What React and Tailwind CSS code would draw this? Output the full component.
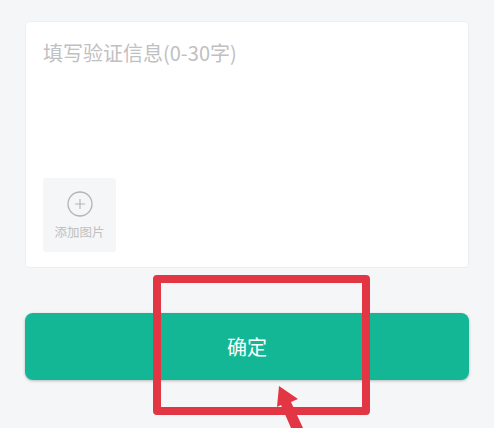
const cjk = { fontFamily: '"Noto Sans CJK SC", "Noto Sans", sans-serif' };

function App() {
  return (
    <div
      className="relative h-[428px] w-[494px] overflow-hidden bg-[#f4f6f8] px-[25px] pt-[21px]"
      style={cjk}
    >
      <div className="flex h-[247px] flex-col justify-between rounded-[4px] border border-[#eceef0] bg-white pb-[15px] pl-[17px] pt-[16px]">
        <p className="text-[20px] leading-[30px] text-[#bfc0c2]">填写验证信息(0-30字)</p>
        <div className="flex h-[74px] w-[73px] flex-col items-center rounded-[3px] bg-[#f4f6f8] pt-[13px]">
          <svg width="26" height="26" viewBox="0 0 26 26" fill="none" stroke="#b4b4b4">
            <circle cx="13" cy="13" r="12" strokeWidth="1.3" />
            <path d="M8 13h10M13 8v10" strokeWidth="1.1" />
          </svg>
          <span className="mt-[6px] text-[12.5px] leading-[18px] text-[#c0c0c0]">添加图片</span>
        </div>
      </div>

      <button className="mt-[45px] flex h-[67px] w-[444px] items-center justify-center rounded-[8px] bg-[#14b795] text-[20px] font-normal text-white shadow-[0_1px_3px_rgba(0,0,0,0.25)]">
        确定
      </button>

      {/* red annotation drawn over the page */}
      <div className="absolute left-[153px] top-[275px] h-[140px] w-[217px] rounded-[4px] border-[8px] border-[#e33645]" />
      <svg className="absolute left-[270px] top-[380px]" width="40" height="48" viewBox="0 0 40 48" fill="#e33645">
        <path d="M9 6 L28 19 L21 22 L33 48 L21 48 L11 25 L7 27 Z" />
      </svg>
    </div>
  );
}

export default App;
